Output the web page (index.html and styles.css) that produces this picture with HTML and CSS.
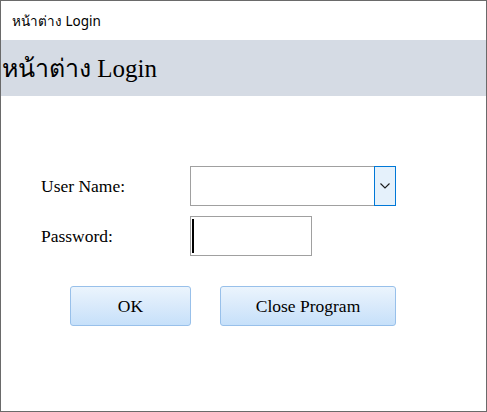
FILE: index.html
```html
<!DOCTYPE html>
<html>
<head>
<meta charset="utf-8">
<link rel="stylesheet" href="styles.css">
</head>
<body>
<div class="window">
  <div class="titlebar">หน้าต่าง Login</div>
  <div class="header">หน้าต่าง Login</div>
  <div class="form">
    <div class="row">
      <label class="label">User Name:</label>
      <div class="combo">
        <div class="combo-text"></div>
        <div class="combo-btn">
          <svg width="10" height="6" viewBox="0 0 10 6"><path d="M0.5 0.5 L5 5 L9.5 0.5" fill="none" stroke="#1a1a1a" stroke-width="1.1"/></svg>
        </div>
      </div>
    </div>
    <div class="row">
      <label class="label">Password:</label>
      <div class="textbox"><span class="caret"></span></div>
    </div>
    <div class="buttons">
      <button class="btn btn-ok">OK</button>
      <button class="btn btn-close">Close Program</button>
    </div>
  </div>
</div>
</body>
</html>
```
FILE: styles.css
```css
* { box-sizing: border-box; }
html, body { margin: 0; padding: 0; background: #fff; }
.window {
  width: 487px;
  height: 412px;
  border: 1px solid #6a6a6a;
  background: #fff;
  display: flex;
  flex-direction: column;
}
.titlebar {
  height: 39px;
  padding-left: 11px;
  display: flex;
  align-items: center;
  font-family: "Noto Sans", "Open Sans", sans-serif;
  font-size: 13.5px;
  color: #000;
}
.header {
  height: 56px;
  background: #d5dbe4;
  padding-left: 1px;
  display: flex;
  align-items: center;
  font-family: "Liberation Serif", serif;
  font-size: 25px;
  color: #000;
}
.form {
  padding-top: 70px;
  padding-left: 40px;
  display: flex;
  flex-direction: column;
  gap: 10px;
}
.row {
  display: flex;
  align-items: center;
  height: 40px;
}
.label {
  width: 149px;
  font-family: "Liberation Serif", serif;
  font-size: 17.5px;
  color: #000;
}
.combo {
  width: 206px;
  height: 40px;
  border: 1px solid #a0a0a0;
  display: flex;
}
.combo-text { flex: 1; }
.combo-btn {
  width: 22px;
  margin: -1px -1px -1px 0;
  border: 1px solid #0078d7;
  background: #e5f1fb;
  display: flex;
  align-items: center;
  justify-content: center;
}
.textbox {
  width: 122px;
  height: 40px;
  border: 1px solid #a0a0a0;
  padding: 2px 0 2px 1px;
  display: flex;
}
.caret {
  width: 2px;
  height: 100%;
  background: #000;
}
.buttons {
  margin-top: 20px;
  padding-left: 29px;
  display: flex;
  gap: 29px;
}
.btn {
  height: 40px;
  border: 1px solid #98c0ea;
  border-radius: 3px;
  background: linear-gradient(to bottom, #ebf4fd 0%, #d9eafb 50%, #c6e0fa 100%);
  font-family: "Liberation Serif", serif;
  font-size: 17.5px;
  color: #000;
  padding: 0;
}
.btn-ok { width: 121px; }
.btn-close { width: 176px; }
```
